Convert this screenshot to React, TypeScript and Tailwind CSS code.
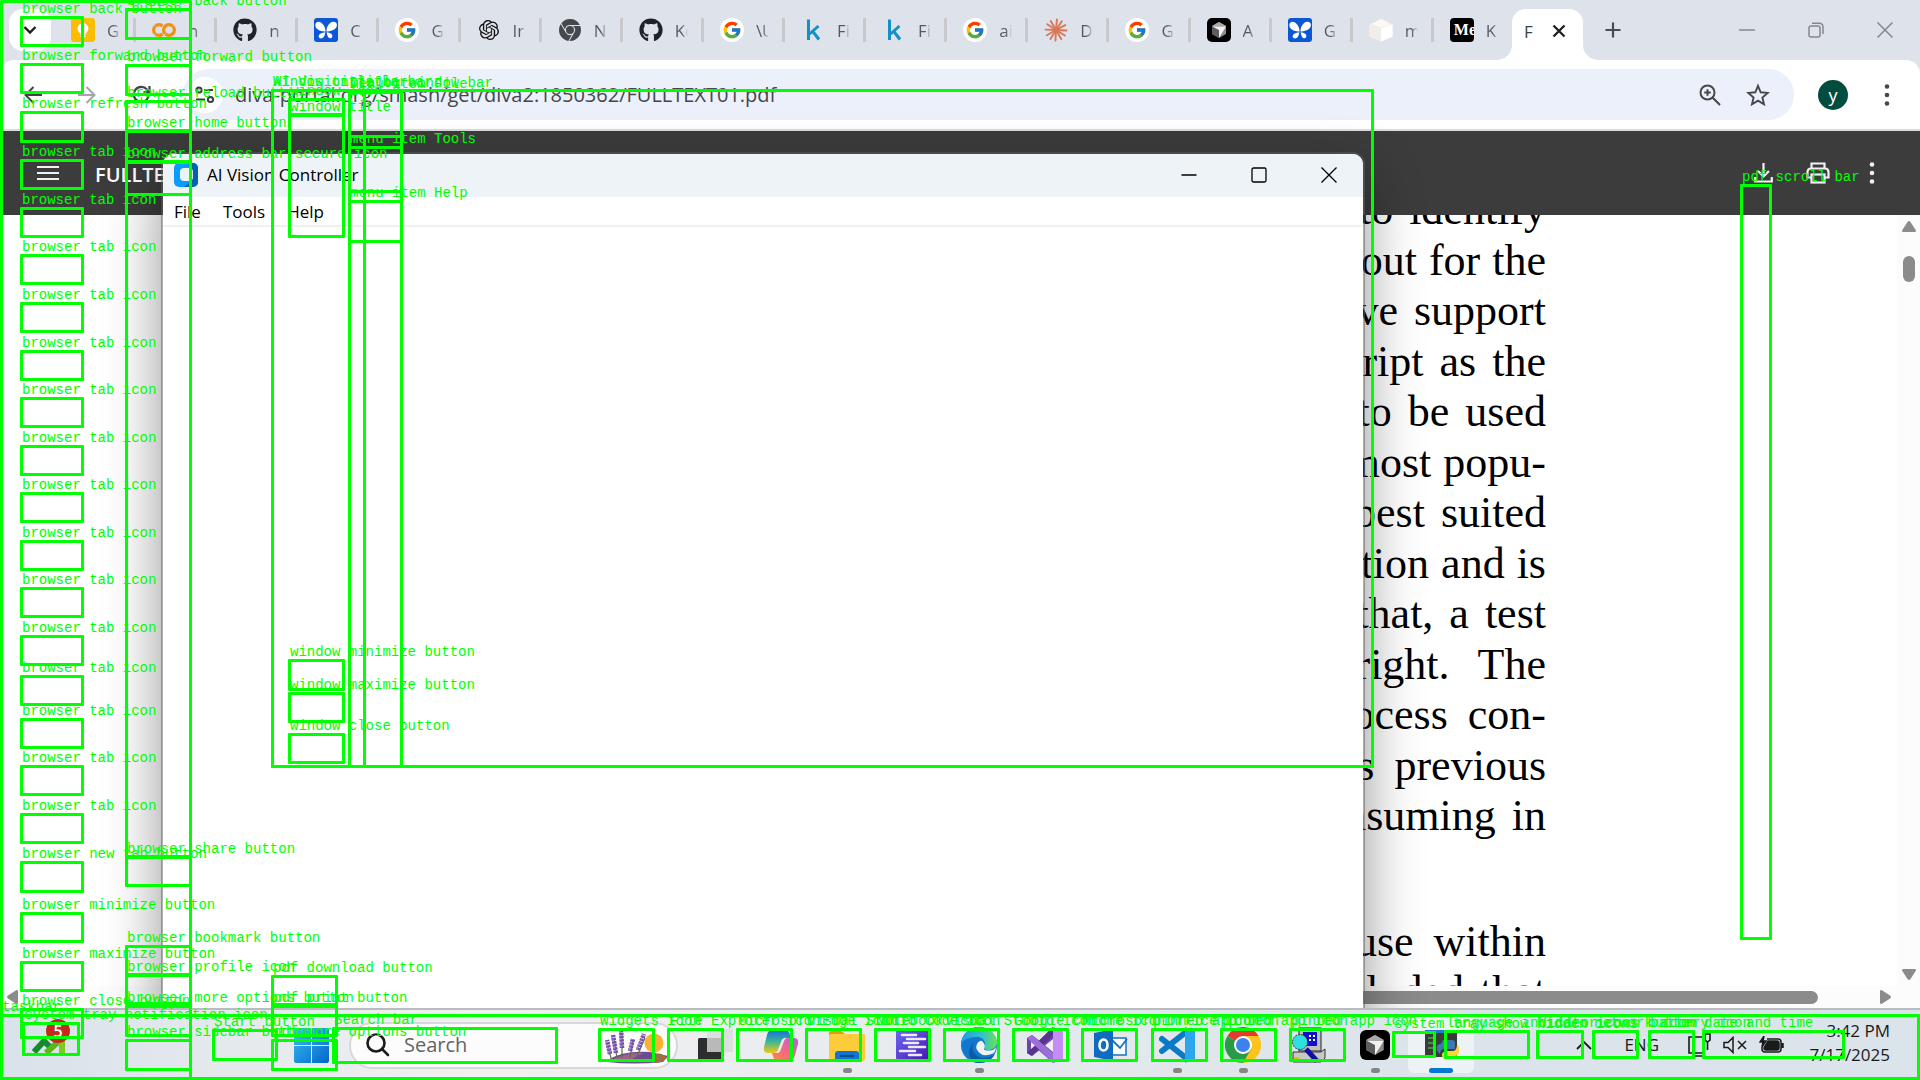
import React from 'react';
import { FaGithub } from 'react-icons/fa';
import { FcGoogle } from 'react-icons/fc';
import { SiOpenai, SiGooglecolab, SiGooglechrome } from 'react-icons/si';

/* ---------- Tab favicons ---------- */

const KeepIcon = () => (
  <svg viewBox="0 0 24 24" className="size-6">
    <rect width="24" height="24" rx="3" fill="#fbbc04" />
    <circle cx="12" cy="10.5" r="5.4" fill="#fff" />
    <path d="M9.5 14h5v3h-5zM9.5 17.6h5v1.6h-5z" fill="#fff" />
  </svg>
);

const ButterflyIcon = () => (
  <svg viewBox="0 0 24 24" className="size-6">
    <rect width="24" height="24" rx="3" fill="#0b57d6" />
    <path
      d="M11.6 13.500C8.500 13.500 1.800 12.500 1.300 7.500 1.200 4 4.300 3 7 4.500c2.900 1.700 4.400 5.500 4.600 9zM12.400 13.500c.100-3.500 1.800-8 5.300-9.500 2.900-1 5.700.500 5.200 3.700-.800 4.300-7.200 5.800-10.500 5.800zM11.300 14.200c-.200 2.900-1.700 6.200-4.400 6.200-2.300 0-2.900-2.300-1.500-3.900 1.400-1.500 3.900-2 5.900-2.300zM12.700 14.200c2 .300 4.600.800 5.400 2.600.800 1.800-.200 3.600-1.800 3.500-2.200-.200-3.400-3.500-3.600-6.100z"
      fill="#fff"
    />
  </svg>
);

const GoogleIcon = () => (
  <span className="flex size-6 items-center justify-center rounded-full bg-white">
    <FcGoogle size={20} />
  </span>
);

const KaggleIcon = () => (
  <svg viewBox="0 0 24 24" className="size-6" fill="none" stroke="#1490c8" strokeWidth="3">
    <path d="M7.500 1.500v20.500M17.500 8l-9 8M11.500 13l6.500 8.500" />
  </svg>
);

const BurstIcon = () => (
  <svg viewBox="0 0 24 24" className="size-6" stroke="#d97757" strokeWidth="1.900" strokeLinecap="round">
    {[5, 34, 62, 93, 122, 150, 183, 212, 240, 272, 303, 330].map((a) => (
      <line key={a} x1="12" y1="12" x2="12" y2="1.500" transform={`rotate(${a} 12 12)`} />
    ))}
  </svg>
);

const CursorIcon = ({ big = false }: { big?: boolean }) => (
  <svg viewBox="0 0 24 24" className={big ? 'size-[30px]' : 'size-6'}>
    <rect width="24" height="24" rx="5" fill="#000" />
    <path d="M12 4l7 4v8l-7 4-7-4V8z" fill="#8b8b8b" />
    <path d="M5 8l7 4v8l-7-4z" fill="#5d5d5d" />
    <path d="M12 4l7 4H5z" fill="#a9a9a9" />
    <path d="M5.500 8.500H19l-7 11.500v-8z" fill="#f1f1f1" />
  </svg>
);

const CubeIcon = () => (
  <svg viewBox="0 0 24 24" className="size-6">
    <path d="M12 0.500l11.500 6v12L12 23.500.500 18.500v-12z" fill="#f4f3ef" />
    <path d="M12 0.500l11.500 6L12 10 .500 6.500z" fill="#faf9f6" stroke="#dddcd7" strokeWidth=".5" />
    <path d="M12 10l11.500-3.500v12L12 23.500z" fill="#fff" />
    <path d="M.500 6.500L12 10v13.500L.500 18.500z" fill="#efeee9" />
  </svg>
);

const MediumIcon = () => (
  <span className="flex size-6 items-center overflow-hidden rounded-[4px] bg-black pl-1 font-['Liberation_Serif',serif] text-base font-bold leading-6 text-white">
    Me
  </span>
);

const tabs: { icon: React.ReactNode; text: string }[] = [
  { icon: <KeepIcon />, text: 'G' },
  { icon: <SiGooglecolab size={24} color="#f29111" />, text: 'n' },
  { icon: <FaGithub size={24} color="#1f2328" />, text: 'n' },
  { icon: <ButterflyIcon />, text: 'C' },
  { icon: <GoogleIcon />, text: 'G' },
  { icon: <SiOpenai size={20} color="#111" />, text: 'Ir' },
  { icon: <SiGooglechrome size={22} color="#45484d" />, text: 'N' },
  { icon: <FaGithub size={24} color="#1f2328" />, text: 'Ke' },
  { icon: <GoogleIcon />, text: '\\U' },
  { icon: <KaggleIcon />, text: 'Fi' },
  { icon: <KaggleIcon />, text: 'Fi' },
  { icon: <GoogleIcon />, text: 'ai' },
  { icon: <BurstIcon />, text: 'D' },
  { icon: <GoogleIcon />, text: 'G' },
  { icon: <CursorIcon />, text: 'A' },
  { icon: <ButterflyIcon />, text: 'G' },
  { icon: <CubeIcon />, text: 'm' },
  { icon: <MediumIcon />, text: 'K' },
];

function TabStrip() {
  return (
    <header className="flex h-[60px] items-center bg-[#dee2ea] pl-[9px]">
      <button aria-label="Search tabs" className="flex size-[42px] items-center justify-center rounded-[14px] bg-white">
        <svg width="16" height="16" viewBox="0 0 16 16" fill="none" stroke="#1f1f1f" strokeWidth="2.400">
          <path d="M2.500 5l5.500 5.500L13.500 5" />
        </svg>
      </button>
      <nav className="ml-1 flex w-[1457px] items-center">
        {tabs.map((t, i) => (
          <button
            key={i}
            className={`flex h-6 flex-1 items-center pl-4 ${i < tabs.length - 1 ? 'border-r-[3px] border-[#c8c9ca]' : ''}`}
          >
            <span className="flex size-6 shrink-0 items-center justify-center">{t.icon}</span>
            <span className="ml-3 w-[13px] overflow-hidden whitespace-nowrap bg-gradient-to-r from-[#55585d] from-50% to-[#dee2ea] bg-clip-text pt-0.5 text-left text-[17px] leading-6 text-transparent">
              {t.text}
            </span>
          </button>
        ))}
      </nav>
      <div className="flex h-full items-end">
        <span className="-ml-[15px] h-[15px] w-[15px] overflow-hidden bg-white">
          <span className="block size-full rounded-br-[15px] bg-[#dee2ea]" />
        </span>
        <button className="flex h-[51px] w-[71px] items-center rounded-t-[14px] bg-white pb-2 pl-3">
          <span className="w-3 overflow-hidden pt-0.5 text-left text-[17px] leading-6 text-[#3c3f43]">F</span>
          <svg className="ml-4" width="14" height="14" viewBox="0 0 14 14" stroke="#1f1f1f" strokeWidth="2.300">
            <path d="M1.500 1.500l11 11M12.500 1.500l-11 11" />
          </svg>
        </button>
        <span className="h-[15px] w-[15px] bg-white">
          <span className="block size-full rounded-bl-[15px] bg-[#dee2ea]" />
        </span>
      </div>
      <button aria-label="New tab" className="flex w-[30px] justify-center">
        <svg width="16" height="16" viewBox="0 0 16 16" stroke="#474a4e" strokeWidth="2.200">
          <path d="M8 .5v15M.5 8h15" />
        </svg>
      </button>
      <div className="ml-auto flex items-center gap-[53px] pr-[27px] text-[#84878c]">
        <button aria-label="Minimize">
          <svg width="16" height="16" viewBox="0 0 16 16" stroke="currentColor" strokeWidth="1.500">
            <path d="M0 8h16" />
          </svg>
        </button>
        <button aria-label="Restore">
          <svg width="16" height="16" viewBox="0 0 16 16" fill="none" stroke="currentColor" strokeWidth="1.500">
            <rect x="1" y="4" width="11" height="11" rx="2" />
            <path d="M4 1.300h7.500a3.500 3.500 0 0 1 3.500 3.500V12" />
          </svg>
        </button>
        <button aria-label="Close">
          <svg width="16" height="16" viewBox="0 0 16 16" stroke="currentColor" strokeWidth="1.500">
            <path d="M.5.5l15 15M15.500.5l-15 15" />
          </svg>
        </button>
      </div>
    </header>
  );
}

const MoreDots = ({ color }: { color: string }) => (
  <svg width="6" height="24" viewBox="0 0 6 24" fill={color}>
    <circle cx="3" cy="3.500" r="2.300" />
    <circle cx="3" cy="12" r="2.300" />
    <circle cx="3" cy="20.500" r="2.300" />
  </svg>
);

function Toolbar() {
  return (
    <div className="bg-[#dee2ea]">
      <div className="flex h-[71px] items-center rounded-t-[14px] border-b-2 border-[#dcdcdc] bg-white pl-6 pr-[30px]">
        <button aria-label="Back" className="w-[18px]">
          <svg width="18" height="18" viewBox="0 0 18 18" fill="none" stroke="#444" strokeWidth="2">
            <path d="M18 9H2M9.500 1L1.500 9l8 8" />
          </svg>
        </button>
        <button aria-label="Forward" className="ml-9 w-[18px]">
          <svg width="18" height="18" viewBox="0 0 18 18" fill="none" stroke="#a4a6a9" strokeWidth="2">
            <path d="M0 9h16M8.500 1l8 8-8 8" />
          </svg>
        </button>
        <button aria-label="Reload" className="ml-9">
          <svg width="19" height="19" viewBox="0 0 19 19" fill="none" stroke="#444" strokeWidth="2.200">
            <path d="M16.500 11.500A7.500 7.500 0 1 1 15 4.500L17 7M17.500 1v6h-6" />
          </svg>
        </button>
        <div className="ml-8 flex h-[51px] flex-1 items-center rounded-full bg-[#ebf0fa] pl-1 pr-6">
          <button aria-label="Site information" className="flex size-9 items-center justify-center rounded-full bg-white">
            <svg width="20" height="18" viewBox="0 0 20 18" fill="none" stroke="#3c3c3c" strokeWidth="2">
              <circle cx="4" cy="4" r="2.600" />
              <path d="M9 4h9M1 13.500h9" />
              <circle cx="15.500" cy="13.500" r="2.600" />
            </svg>
          </button>
          <input
            aria-label="Address"
            className="ml-3 flex-1 bg-transparent text-[20px] leading-7 text-[#45474b] outline-none"
            defaultValue="diva-portal.org/smash/get/diva2:1850362/FULLTEXT01.pdf"
          />
          <button aria-label="Zoom">
            <svg width="22" height="22" viewBox="0 0 22 22" fill="none" stroke="#474747" strokeWidth="2">
              <circle cx="8.500" cy="8.500" r="7" />
              <path d="M13.500 13.500L21 21M8.500 5.200v6.600M5.200 8.500h6.600" />
            </svg>
          </button>
          <button aria-label="Bookmark this page" className="ml-[25px]">
            <svg width="24" height="24" viewBox="0 0 24 24" fill="none" stroke="#474747" strokeWidth="1.900">
              <path d="M12 2.800l2.700 6.500 7 .600-5.300 4.600 1.600 6.800L12 17.700l-6 3.600 1.600-6.800L2.300 9.900l7-.600z" />
            </svg>
          </button>
        </div>
        <button className="ml-6 size-[30px] rounded-full bg-[#004d40] text-lg leading-6 text-white">y</button>
        <button aria-label="Menu" className="ml-9 flex">
          <MoreDots color="#474747" />
        </button>
      </div>
    </div>
  );
}

/* ---------- PDF viewer ---------- */

const lines: { words: string[]; gap: string }[] = [
  { words: ['to', 'identify'], gap: 'gap-4' },
  { words: ['out', 'for', 'the'], gap: 'gap-3' },
  { words: ['native', 'support'], gap: 'gap-4' },
  { words: ['JavaScript', 'as', 'the'], gap: 'gap-4' },
  { words: ['to', 'be', 'used'], gap: 'gap-4' },
  { words: ['most', 'popu-'], gap: 'gap-3' },
  { words: ['best', 'suited'], gap: 'gap-4' },
  { words: ['automation', 'and', 'is'], gap: 'gap-3' },
  { words: ['that,', 'a', 'test'], gap: 'gap-4' },
  { words: ['right.', 'The'], gap: 'gap-7' },
  { words: ['process', 'con-'], gap: 'gap-5' },
  { words: ['is', 'previous'], gap: 'gap-5' },
  { words: ['consuming', 'in'], gap: 'gap-4' },
];

const lastLines: { words: string[]; gap: string }[] = [
  { words: ['use', 'within'], gap: 'gap-5' },
  { words: ['concluded', 'that'], gap: 'gap-4' },
];

const Line = ({ words, gap }: { words: string[]; gap: string }) => (
  <p className={`flex justify-end ${gap}`}>
    {words.map((w, i) => (
      <span key={i}>{w}</span>
    ))}
  </p>
);

function PdfViewer() {
  return (
    <main className="flex min-h-0 flex-1 flex-col">
      <div className="flex h-[84px] shrink-0 items-center bg-[#3c3c3c] pl-[37px] pr-[45px]">
        <button aria-label="Menu">
          <svg width="22" height="16" viewBox="0 0 22 16" stroke="#f1f1f1" strokeWidth="2">
            <path d="M0 2h22M0 8h22M0 14h22" />
          </svg>
        </button>
        <span className="ml-9 pt-1 text-[20px] font-semibold leading-7 text-white">FULLTEXT01.pdf</span>
        <div className="ml-auto flex items-center gap-[33px]">
          <button aria-label="Download">
            <svg width="19" height="20" viewBox="0 0 19 20" fill="none" stroke="#f1f1f1" strokeWidth="2.200">
              <path d="M9.500 0v13M4 8l5.500 5.500L15 8M1.200 14v4.500h16.600V14" />
            </svg>
          </button>
          <button aria-label="Print">
            <svg width="24" height="22" viewBox="0 0 24 22" fill="none" stroke="#f1f1f1" strokeWidth="2.200">
              <path d="M5.500 6.500v-5h13v5M5 15.500H1.500v-5c0-2.500 1-4 3.500-4h14c2.500 0 3.500 1.500 3.500 4v5H19" />
              <rect x="5.500" y="12.500" width="13" height="8" />
            </svg>
          </button>
          <button aria-label="More actions" className="ml-1.5">
            <MoreDots color="#f1f1f1" />
          </button>
        </div>
      </div>
      <div className="flex min-h-0 flex-1">
        <div className="min-w-0 flex-1 overflow-hidden bg-white pr-[351px]">
          <article className="-mt-[30px] font-['Liberation_Serif',serif] text-[44px] leading-[50px] text-black">
            <div className="flex h-[656px] flex-col justify-between">
              {lines.map((l, i) => (
                <Line key={i} {...l} />
              ))}
            </div>
            <div className="mt-[76px]">
              {lastLines.map((l, i) => (
                <Line key={i} {...l} />
              ))}
            </div>
          </article>
        </div>
        <div className="flex w-[23px] flex-col items-center bg-[#fcfcfc] py-[6px]">
          <svg width="14" height="11" viewBox="0 0 14 11" fill="#8b8b8b">
            <path d="M5.500 1Q7-.8 8.500 1L14 9.500Q14 11 13 11H1Q0 11 0 9.500z" />
          </svg>
          <span className="mt-6 h-[26px] w-3 rounded-full bg-[#8b8b8b]" />
          <svg className="mt-auto" width="14" height="11" viewBox="0 0 14 11" fill="#8b8b8b">
            <path d="M5.500 10Q7 11.800 8.500 10L14 1.500Q14 0 13 0H1Q0 0 0 1.500z" />
          </svg>
        </div>
      </div>
      <div className="flex h-[22px] shrink-0 items-center bg-[#fcfcfc] pl-[7px] pr-[29px]">
        <svg width="11" height="14" viewBox="0 0 11 14" fill="#8b8b8b">
          <path d="M1 5.500Q-.8 7 1 8.500L9.500 14Q11 14 11 13V1Q11 0 9.500 0z" />
        </svg>
        <span className="ml-[360px] mr-[62px] h-[13px] flex-1 rounded-full bg-[#8b8b8b]" />
        <svg width="11" height="14" viewBox="0 0 11 14" fill="#8b8b8b">
          <path d="M10 5.500Q11.800 7 10 8.500L1.500 14Q0 14 0 13V1Q0 0 1.500 0z" />
        </svg>
      </div>
    </main>
  );
}

/* ---------- Floating application window ---------- */

function AppWindow() {
  return (
    <section className="absolute left-[161px] top-[152px] z-10 flex h-[880px] w-[1204px] flex-col overflow-hidden rounded-t-xl border-2 border-[#5e5e5e]/50 bg-white bg-clip-padding shadow-[0_24px_56px_rgba(0,0,0,0.42)]">
      <div className="flex h-[43px] shrink-0 items-center bg-[#edf3f6] pl-[11px] pr-[26px] pb-0.5">
        <svg width="24" height="24" viewBox="0 0 24 24">
          <rect width="24" height="24" rx="5" fill="#0a9bff" />
          <path d="M14 0h5a5 5 0 0 1 5 5v14a5 5 0 0 1-5 5h-9l8-7z" fill="#0560b5" />
          <rect x="6" y="5" width="13" height="13" rx="4" fill="#edf3f6" />
        </svg>
        <h1 className="ml-[9px] text-[17px] leading-6 text-black">AI Vision Controller</h1>
        <div className="ml-auto flex items-center gap-[54px]">
          <button aria-label="Minimize">
            <svg width="16" height="16" viewBox="0 0 16 16" stroke="#000" strokeWidth="1.300">
              <path d="M.5 8h15" />
            </svg>
          </button>
          <button aria-label="Maximize">
            <svg width="16" height="16" viewBox="0 0 16 16" fill="none" stroke="#000" strokeWidth="1.300">
              <rect x="1" y="1" width="14" height="14" rx="1.500" />
            </svg>
          </button>
          <button aria-label="Close">
            <svg width="16" height="16" viewBox="0 0 16 16" stroke="#000" strokeWidth="1.300">
              <path d="M.5.5l15 15M15.500.5l-15 15" />
            </svg>
          </button>
        </div>
      </div>
      <nav className="flex h-[30px] shrink-0 items-center gap-[22px] border-b-2 border-[#f0f0f0] pl-[11px] pt-0.5 text-[17px] leading-6 text-black">
        <button>File</button>
        <button>Tools</button>
        <button>Help</button>
      </nav>
    </section>
  );
}

/* ---------- Taskbar ---------- */

const StocksIcon = () => (
  <svg width="34" height="22" viewBox="0 0 34 22">
    <path d="M2 18L12 7l8 8" fill="none" stroke="#128a2e" strokeWidth="6" />
    <path d="M14 19L28 6" stroke="#5bb81c" strokeWidth="6" />
    <path d="M20 1h13v20h-6V7h-7z" fill="#7ccb1d" />
  </svg>
);

const WindowsLogo = () => (
  <svg width="35" height="35" viewBox="0 0 35 35">
    <defs>
      <linearGradient id="win" x1="0" y1="0" x2="1" y2="1">
        <stop offset="0" stopColor="#3dbdf5" />
        <stop offset="1" stopColor="#0067c9" />
      </linearGradient>
    </defs>
    <path d="M1.500 0H17v17H0V1.500zM18 0h15.500L35 1.500V17H18zM0 18h17v17H1.500L0 33.500zM18 18h17v15.500L33.500 35H18z" fill="url(#win)" />
  </svg>
);

const Lavender = () => (
  <svg width="64" height="38" viewBox="0 0 64 38">
    <circle cx="50" cy="17" r="9.500" fill="#fbb034" />
    <path d="M3 34Q20 24 46 26l18 4-5 6q-30 3-56 0z" fill="#6f4a8e" />
    <path d="M6 35q14-9 34-8-10 4-16 9z" fill="#a35f8d" />
    <path d="M48 30q8-6 15 2-5 5-12 5z" fill="#9c6f43" />
    <g stroke="#4f7a3a" strokeWidth="1.200">
      <path d="M7 32L3 18M13 32l-3-18M18 32V8M26 32l3-18M33 30l8-18" />
    </g>
    <g stroke="#7650a8" strokeWidth="4.500" strokeDasharray="2.500 .7" strokeLinejoin="round">
      <path d="M6 28L3 14M12 27L9 9M18 22L17 2M26 25l3-12M34 24l6-16" />
    </g>
    <g stroke="#a487cc" strokeWidth="1.600" strokeDasharray="2 1.500">
      <path d="M5 27L2 14M11 26L8 10M17 21L16 3M25 24l3-11M33 23l6-14" />
    </g>
  </svg>
);

const TaskViewIcon = () => (
  <svg width="36" height="36" viewBox="0 0 36 36">
    <rect x="1" y="11" width="26" height="23" rx="1.500" fill="#2d2d2d" />
    <rect x="10" y="2" width="26" height="23" rx="1.500" fill="#dcdcdc" opacity=".9" />
    <rect x="10" y="11" width="17" height="14" fill="#b9b9b9" />
  </svg>
);

const CopilotIcon = () => (
  <svg width="36" height="36" viewBox="0 0 36 36">
    <defs>
      <linearGradient id="cp1" x1="0" y1="0" x2="0" y2="1">
        <stop offset="0" stopColor="#1a6be0" />
        <stop offset=".5" stopColor="#3ab795" />
        <stop offset="1" stopColor="#f6c514" />
      </linearGradient>
      <linearGradient id="cp2" x1="1" y1="0" x2="0" y2="1">
        <stop offset="0" stopColor="#b35cf0" />
        <stop offset=".5" stopColor="#f2658b" />
        <stop offset="1" stopColor="#fb8a3c" />
      </linearGradient>
    </defs>
    <path d="M9 3h13q4 0 5 5l1 3h-6q-3 0-4 4l-3 8q-1 3-4 3H5q-5 0-4-6L4 8q1-5 5-5z" fill="url(#cp1)" />
    <path d="M27 33H14q-3 0-4-4l-1-3h5q3 0 4-4l3-8q1-3 4-3h6q5 0 4 6l-3 11q-1 5-5 5z" fill="url(#cp2)" />
  </svg>
);

const FolderIcon = () => (
  <svg width="36" height="36" viewBox="0 0 36 36">
    <path d="M0 6q0-2 2-2h10l4 3h18q2 0 2 2v8H0z" fill="#e09b10" />
    <rect y="7" width="36" height="27" rx="2" fill="#fecb3b" />
    <path d="M6 34v-7q0-3 3-3h18q3 0 3 3v7z" fill="#1374cf" />
    <path d="M11 29h14" stroke="#0a4a8c" strokeWidth="2" />
  </svg>
);

const PurpleIcon = () => (
  <svg width="36" height="36" viewBox="0 0 36 36">
    <defs>
      <linearGradient id="pp" x1="0" y1="0" x2="1" y2="1">
        <stop offset="0" stopColor="#6a6cf0" />
        <stop offset="1" stopColor="#4a12b0" />
      </linearGradient>
    </defs>
    <rect x="1" y="1" width="34" height="33" rx="4" fill="url(#pp)" />
    <path d="M7 8h14M12 12h18M9 16h14M14 20h16M5 24h15M14 28h12" stroke="#ece9ff" strokeWidth="2.600" strokeLinecap="round" />
  </svg>
);

const EdgeIcon = () => (
  <svg width="36" height="36" viewBox="0 0 36 36">
    <defs>
      <linearGradient id="ed1" x1="0" y1="0" x2="1" y2="0">
        <stop offset="0" stopColor="#1b9de2" />
        <stop offset=".6" stopColor="#35c1c9" />
        <stop offset="1" stopColor="#6be052" />
      </linearGradient>
    </defs>
    <circle cx="18" cy="18" r="18" fill="#1277cf" />
    <path d="M0 17C1 6 9 0 18 0c11 0 18 8 18 15 0 6-5 8-9 8-3 0-5-1-4-3 3-5-1-10-7-10C8 10 2 13 0 17z" fill="url(#ed1)" />
    <path d="M13 15c-4 6 0 16 10 16 5 0 9-2 11-4-3 6-9 9-16 9C9 36 4 24 13 15z" fill="#0c59a4" />
    <path d="M22 15q3 4 1 6-1 3 6 2.500 4-.500 6-3-1 5-3 6-9 4-14-1t-1-10q3-3 5-.500z" fill="#f3f3f3" />
  </svg>
);

const VisualStudioIcon = () => (
  <svg width="36" height="36" viewBox="0 0 36 36">
    <path d="M0 11l5-3 7 5.500L26 0l10 4v28l-10 4-14-12.500L5 29l-5-3z" fill="#6a45a5" />
    <path d="M5 29L26 8V0L0 26z" fill="#583390" />
    <path d="M5 8l21 18v10L0 11z" fill="#9a6fd8" />
    <path d="M26 0l10 4v28l-10 4z" fill="#c68cf6" />
    <path d="M4 15v7l4-3.500zM26 12v13l-8-6.500z" fill="#f0f0f2" />
  </svg>
);

const OutlookIcon = () => (
  <svg width="34" height="34" viewBox="0 0 34 34">
    <rect x="18" y="10" width="14" height="17" fill="#fff" stroke="#1272c6" strokeWidth="1.500" />
    <path d="M18 12l8 8 7-9" fill="none" stroke="#1272c6" strokeWidth="1.800" />
    <path d="M0 5l19-4v32L0 29z" fill="#0f6cbf" />
    <ellipse cx="9.500" cy="17" rx="4" ry="5.500" fill="none" stroke="#fff" strokeWidth="2.600" />
  </svg>
);

const VsCodeIcon = () => (
  <svg width="36" height="36" viewBox="0 0 36 36">
    <path d="M3 12l24 19M3 24L27 5" stroke="#0a7ac4" strokeWidth="6" strokeLinecap="round" />
    <path d="M26 0l10 4v28l-10 4z" fill="#2ba5ee" />
  </svg>
);

const ChromeIcon = () => (
  <svg width="36" height="36" viewBox="0 0 36 36">
    <path d="M18 18L2.400 9A18 18 0 0 1 33.600 9z" fill="#e33b2e" />
    <path d="M18 18V9h15.600A18 18 0 0 1 18 36z" fill="#fcc31e" />
    <path d="M18 18l7.800 4.500L18 36A18 18 0 0 1 2.400 9z" fill="#2a9a48" />
    <circle cx="18" cy="18" r="9" fill="#fff" />
    <circle cx="18" cy="18" r="7" fill="#3b82ee" />
  </svg>
);

const ComputerIcon = () => (
  <svg width="36" height="36" viewBox="0 0 36 36">
    <rect x="8" y="1" width="22" height="23" fill="#c0c0c0" stroke="#222" />
    <rect x="12" y="5" width="14" height="14" fill="#1010c8" />
    <path d="M18 9h2M22 9h2M18 13h2M22 13h2" stroke="#fff" strokeWidth="2" />
    <path d="M2 25h28l4-3v9l-4 4H2z" fill="#c8c8c8" stroke="#333" />
    <path d="M3 31h5" stroke="#c8c800" strokeWidth="2" />
    <circle cx="9" cy="15" r="7.500" fill="#2ee0e0" stroke="#333" strokeDasharray="2 1" />
    <path d="M15 22l11 12" stroke="#1010a0" strokeWidth="5" />
  </svg>
);

const PythonConsoleIcon = () => (
  <svg width="36" height="36" viewBox="0 0 36 36">
    <rect x="2" y="3" width="32" height="27" fill="#3a3a3a" />
    <rect x="2" y="3" width="32" height="3" fill="#1a7ad4" />
    <path d="M5 11h8M5 16h6M5 21h7" stroke="#3fae3f" strokeWidth="1.500" />
    <path d="M20 13h9q3 0 3 3v6H21q-4 0-4 5-4-3-3-7 0-3 4-3z" fill="#3c79b4" />
    <path d="M34 17q3 3 2 8-1 4-4 4h-4v3h-7q-2-1-2-4t4-4h7q4 0 4-7z" fill="#ffd43b" />
  </svg>
);

const apps: { name: string; icon: React.ReactNode; dot?: 'running' | 'active' }[] = [
  { name: 'Task view', icon: <TaskViewIcon /> },
  { name: 'Copilot', icon: <CopilotIcon /> },
  { name: 'File Explorer', icon: <FolderIcon />, dot: 'running' },
  { name: 'Notes', icon: <PurpleIcon /> },
  { name: 'Microsoft Edge', icon: <EdgeIcon />, dot: 'running' },
  { name: 'Visual Studio', icon: <VisualStudioIcon /> },
  { name: 'Outlook', icon: <OutlookIcon /> },
  { name: 'Visual Studio Code', icon: <VsCodeIcon />, dot: 'running' },
  { name: 'Google Chrome', icon: <ChromeIcon />, dot: 'running' },
  { name: 'System tool', icon: <ComputerIcon /> },
  { name: 'Cursor', icon: <CursorIcon big />, dot: 'running' },
  { name: 'Python', icon: <PythonConsoleIcon />, dot: 'active' },
];

function Taskbar() {
  return (
    <footer className="relative z-20 flex h-[72px] shrink-0 items-center border-t-2 border-[#b9bcbf] bg-gradient-to-r from-[#d9e2ea] via-[#f1f1f1] via-25% to-[#dbe4ea] to-75% pl-8 pr-[30px]">
      <button aria-label="Stocks" className="relative w-9">
        <StocksIcon />
        <span className="absolute -top-[15px] left-[14px] size-6 rounded-full bg-[#c42b1c] text-center text-base font-semibold leading-6 text-white">
          5
        </span>
      </button>
      <button aria-label="Start" className="ml-[226px]">
        <WindowsLogo />
      </button>
      <label className="ml-5 flex h-[47px] w-[329px] items-center rounded-full border-2 border-[#d8d8d8] bg-[#fcfcfc] pl-[15px] pr-2">
        <svg width="24" height="24" viewBox="0 0 24 24" fill="none" stroke="#1c1c1c" strokeWidth="2.600">
          <circle cx="10" cy="10" r="8.500" />
          <path d="M16 16l6 6" strokeLinecap="round" />
        </svg>
        <input
          aria-label="Search"
          placeholder="Search"
          className="ml-[14px] w-[180px] bg-transparent text-[20px] leading-7 outline-none placeholder:text-[#636363]"
        />
        <span className="ml-auto">
          <Lavender />
        </span>
      </label>
      <nav className="ml-1 flex w-[792px] items-center">
        {apps.map((a) => (
          <button
            key={a.name}
            aria-label={a.name}
            className={`relative flex h-[56px] flex-1 items-center justify-center ${a.dot === 'active' ? 'rounded-md bg-white/50' : ''}`}
          >
            {a.icon}
            {a.dot === 'running' && <span className="absolute bottom-0 h-[5px] w-[9px] rounded-full bg-[#858585]" />}
            {a.dot === 'active' && <span className="absolute bottom-0 h-[5px] w-6 rounded-full bg-[#0078d4]" />}
          </button>
        ))}
      </nav>
      <div className="ml-auto flex items-center text-[#1a1a1a]">
        <button aria-label="Show hidden icons">
          <svg width="16" height="10" viewBox="0 0 16 10" fill="none" stroke="currentColor" strokeWidth="1.800">
            <path d="M1 9l7-7 7 7" />
          </svg>
        </button>
        <button className="ml-8 text-[17px] leading-6">ENG</button>
        <button aria-label="Network, sound and battery" className="ml-7 flex items-center gap-3">
          <svg width="24" height="26" viewBox="0 0 24 26" fill="none" stroke="currentColor" strokeWidth="1.600">
            <path d="M15 5H2v16h15M6 24h12M18 2h5v6l-2.500 2L18 8zM20.500 10v8" />
          </svg>
          <svg width="24" height="18" viewBox="0 0 24 18" fill="none" stroke="currentColor" strokeWidth="1.500">
            <path d="M1 6.500v5h4l5 5v-15l-5 5zM15 5l8 8M23 5l-8 8" />
          </svg>
          <svg width="25" height="18" viewBox="0 0 25 18" fill="none" stroke="currentColor" strokeWidth="1.500">
            <path d="M8 3h11q3 0 3 3v7q0 3-3 3H6q-3 0-3-3v-2" />
            <path d="M9 5h9q2 0 2 2v5q0 2-2 2H7q-2 0-2-2z" fill="currentColor" />
            <path d="M5 0L1 6h3L3 11l4-6H4z" fill="currentColor" />
            <path d="M23.500 7v5" strokeWidth="2.500" />
          </svg>
        </button>
        <button className="ml-4 w-[90px] whitespace-nowrap pb-1 text-right text-[17px] leading-6">
          <time className="flex flex-col items-end">
            <span>3:42 PM</span>
            <span>7/17/2025</span>
          </time>
        </button>
      </div>
    </footer>
  );
}

/* ---------- Detection overlay ---------- */

type Detection = [label: string, x: number, y: number, w: number, h: number];

const tabIconTops = [159, 207, 254, 302, 350, 397, 445, 492, 540, 587, 635, 675, 718, 765, 813];

const detections: Detection[] = [
  ['', 0, 0, 192, 1080],
  ['browser back button', 20, 16, 64, 31],
  ['browser forward button', 20, 63, 64, 31],
  ['browser refresh button', 20, 111, 64, 32],
  ...tabIconTops.map((y): Detection => ['browser tab icon', 20, y, 64, 31]),
  ['browser new tab button', 20, 861, 64, 32],
  ['browser minimize button', 20, 912, 64, 31],
  ['browser maximize button', 20, 961, 64, 31],
  ['browser close button', 20, 1008, 64, 31],
  ['browser back button', 125, 8, 67, 32],
  ['browser forward button', 125, 64, 67, 32],
  ['browser reload button', 125, 100, 67, 32],
  ['browser home button', 125, 130, 67, 33],
  ['browser address bar secure icon', 125, 161, 67, 35],
  ['', 125, 160, 67, 698],
  ['browser share button', 125, 856, 67, 31],
  ['browser bookmark button', 125, 945, 67, 31],
  ['browser profile icon', 125, 974, 67, 31],
  ['browser more options button', 125, 1005, 67, 32],
  ['browser sidebar button', 125, 1039, 67, 32],
  ['pdf download button', 271, 975, 67, 31],
  ['pdf print button', 271, 1005, 67, 32],
  ['pdf more options button', 271, 1039, 67, 32],
  ['AI Vision title bar', 271, 89, 1103, 679],
  ['Window title bar', 271, 89, 1103, 679],
  ['window icon', 288, 98, 57, 18],
  ['window title', 288, 114, 57, 124],
  ['Dialog window bar', 348, 90, 18, 678],
  ['menu item File', 348, 91, 55, 47],
  ['', 363, 91, 40, 677],
  ['menu item Tools', 348, 146, 55, 47],
  ['menu item Help', 348, 200, 55, 43],
  ['window minimize button', 288, 659, 57, 32],
  ['window maximize button', 288, 692, 57, 31],
  ['window close button', 288, 733, 57, 31],
  ['pdf scroll bar', 1740, 184, 32, 756],
  ['taskbar', 0, 1014, 1920, 66],
  ['system tray notification icon', 22, 1022, 58, 34],
  ['Start button', 212, 1029, 66, 32],
  ['Search bar', 332, 1027, 226, 37],
  ['Widgets icon', 598, 1028, 57, 34],
  ['File Explorer icon', 667, 1028, 57, 34],
  ['Microsoft Edge icon', 736, 1028, 57, 34],
  ['Visual Studio Code icon', 805, 1028, 57, 34],
  ['Notebook icon', 874, 1028, 57, 34],
  ['Visual Studio icon', 943, 1028, 57, 34],
  ['Google Chrome icon', 1012, 1028, 57, 34],
  ['Microsoft Office icon', 1081, 1028, 57, 34],
  ['pinned app icon', 1151, 1028, 57, 34],
  ['pinned app icon', 1220, 1028, 57, 34],
  ['pinned app icon', 1289, 1028, 57, 34],
  ['system tray show hidden icons', 1392, 1031, 44, 27],
  ['language indicator', 1444, 1030, 86, 29],
  ['hidden icons button', 1536, 1030, 48, 29],
  ['network icon', 1592, 1030, 47, 29],
  ['battery icon', 1648, 1030, 47, 29],
  ['date and time', 1702, 1030, 143, 29],
];

function DetectionOverlay() {
  return (
    <div className="pointer-events-none absolute inset-0 z-30 overflow-hidden">
      {detections.map(([label, x, y, w, h], i) => (
        <div key={i} className="absolute rounded-[1px] border-[3px] border-[#00ff00]" style={{ left: x, top: y, width: w, height: h }}>
          {label && (
            <span className="absolute -left-px bottom-full whitespace-nowrap pb-0.5 font-['Liberation_Mono',monospace] text-sm leading-4 text-[#00ff00]">
              {label}
            </span>
          )}
        </div>
      ))}
    </div>
  );
}

export default function App() {
  return (
    <div className="relative flex h-screen flex-col overflow-hidden bg-white font-['Open_Sans','Noto_Sans',sans-serif]">
      <TabStrip />
      <Toolbar />
      <PdfViewer />
      <AppWindow />
      <Taskbar />
      <DetectionOverlay />
    </div>
  );
}
